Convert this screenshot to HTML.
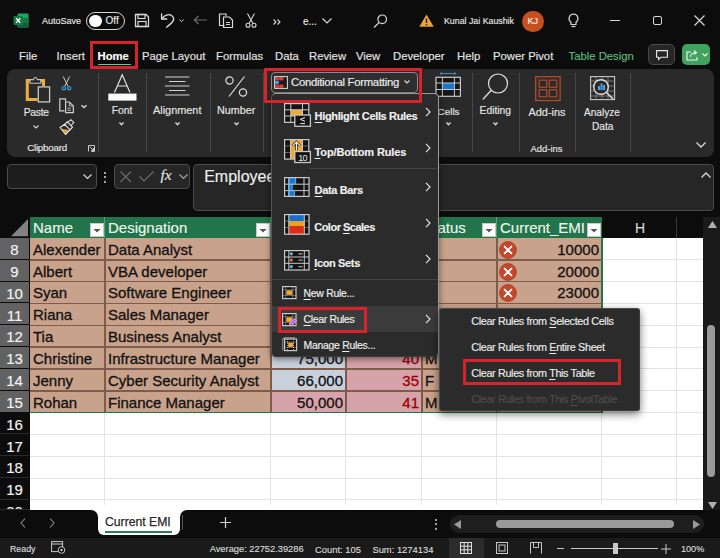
<!DOCTYPE html>
<html><head><meta charset="utf-8">
<style>
*{margin:0;padding:0;box-sizing:border-box}
html,body{width:720px;height:558px;overflow:hidden;background:#0c0c0c;font-family:"Liberation Sans",sans-serif;color:#fff;position:relative}
.a{position:absolute}
.t{position:absolute;white-space:nowrap;line-height:1;-webkit-text-stroke:0.15px currentColor}
svg{position:absolute;overflow:visible}
u{text-decoration:underline;text-underline-offset:1.5px;text-decoration-thickness:1px}
</style></head><body>
<div class="a" style="left:0px;top:0px;width:720px;height:69px;background:#0c0c0c"></div>
<svg style="left:13px;top:13px" width="16" height="15" viewBox="0 0 16 15">
<rect x="4.5" y="0.5" width="11" height="14" rx="1.2" fill="#21a366"/>
<rect x="4.5" y="5" width="11" height="4.5" fill="#107c41"/>
<rect x="4.5" y="9.5" width="11" height="5" rx="1.2" fill="#185c37"/>
<rect x="0.5" y="3" width="9.5" height="9" rx="1" fill="#107c41"/>
<path d="M3.2 5.2L7.3 9.8M7.3 5.2L3.2 9.8" stroke="#fff" stroke-width="1.3"/>
</svg>
<div class="t" style="left:42px;top:16.68px;font-size:9px;color:#e6e6e6;font-weight:normal;">AutoSave</div>
<div class="a" style="left:85.5px;top:11.5px;width:39px;height:18px;border:1.5px solid #d8d8d8;border-radius:9px"></div>
<div class="a" style="left:88.5px;top:14.5px;width:13px;height:12px;background:#fff;border-radius:6.5px"></div>
<div class="t" style="left:105.5px;top:15.73px;font-size:10px;color:#e6e6e6;font-weight:normal;">Off</div>
<svg style="left:134px;top:13px" width="16" height="15" viewBox="0 0 16 15">
<path d="M1.5 1.5H12L14.5 4V13.5H1.5Z" fill="none" stroke="#d8d8d8" stroke-width="1.3"/>
<rect x="4" y="1.5" width="7" height="4" fill="none" stroke="#d8d8d8" stroke-width="1.2"/>
<rect x="4" y="8.5" width="8" height="5" fill="none" stroke="#d8d8d8" stroke-width="1.2"/>
</svg>
<svg style="left:160px;top:13px" width="15" height="15" viewBox="0 0 15 15">
<path d="M2 5.6C4.5 1.5 10 0.3 12.8 3.6C14.8 6 13.6 9.2 6.5 14.2" fill="none" stroke="#e0e0e0" stroke-width="1.3" stroke-linecap="round"/>
<path d="M1.6 0.8V6H6.8" fill="none" stroke="#e0e0e0" stroke-width="1.3" stroke-linecap="round" stroke-linejoin="round"/>
</svg>
<svg style="left:179px;top:19px" width="5" height="4" viewBox="0 0 5 4"><path d="M0.5 0.5L2.5 2.7L4.5 0.5" fill="none" stroke="#d8d8d8" stroke-width="1"/></svg>
<svg style="left:193px;top:15px" width="15" height="10" viewBox="0 0 15 10"><path d="M14 5H1.5M5.5 1L1.3 5L5.5 9" fill="none" stroke="#6a6a6a" stroke-width="1.2"/></svg>
<svg style="left:218px;top:13px" width="16" height="15" viewBox="0 0 16 15">
<path d="M6.5 12.5H1.5V1H8V3.5" fill="none" stroke="#d8d8d8" stroke-width="1.2"/>
<path d="M5.5 4H11.5L14.5 7V14.5H5.5Z" fill="none" stroke="#d8d8d8" stroke-width="1.2"/>
<path d="M8 9.5H12M8 11.5H12" stroke="#d8d8d8" stroke-width="1"/>
</svg>
<svg style="left:245px;top:13px" width="12" height="15" viewBox="0 0 12 15">
<path d="M2.5 0.5L8 10.5M9.5 0.5L4 10.5" stroke="#d8d8d8" stroke-width="1.1"/>
<circle cx="3" cy="12.3" r="2" fill="none" stroke="#d8d8d8" stroke-width="1.1"/>
<circle cx="9" cy="12.3" r="2" fill="none" stroke="#d8d8d8" stroke-width="1.1"/>
</svg>
<svg style="left:273px;top:19px" width="8" height="6" viewBox="0 0 8 6"><path d="M0.5 0.5L3 3L0.5 5.5M4.5 0.5L7 3L4.5 5.5" fill="none" stroke="#d8d8d8" stroke-width="1.1"/></svg>
<div class="t" style="left:303px;top:16.54px;font-size:10px;color:#e6e6e6;font-weight:normal;">e...</div>
<svg style="left:322px;top:18px" width="10" height="6" viewBox="0 0 10 6"><path d="M0.5 0.5L5 5L9.5 0.5" fill="none" stroke="#d8d8d8" stroke-width="1.2"/></svg>
<svg style="left:373px;top:14px" width="15" height="14" viewBox="0 0 15 14">
<circle cx="9.2" cy="5.3" r="4.3" fill="none" stroke="#d8d8d8" stroke-width="1.2"/>
<path d="M6.2 8.4L1 13.5" stroke="#d8d8d8" stroke-width="1.3"/>
</svg>
<svg style="left:419px;top:14px" width="15" height="13" viewBox="0 0 15 13">
<path d="M7.5 0.5L14.7 12.8H0.3Z" fill="#eaa435"/>
<path d="M7.5 4.5V9" stroke="#1a1a1a" stroke-width="1.3"/>
<circle cx="7.5" cy="10.8" r="0.8" fill="#1a1a1a"/>
</svg>
<div class="t" style="left:444px;top:17.35px;font-size:8.8px;color:#e6e6e6;font-weight:normal;">Kunal Jai Kaushik</div>
<div class="a" style="left:522px;top:10.5px;width:21.5px;height:21.5px;background:#c8501e;border-radius:50%"></div>
<div class="t" style="left:382.79999999999995px;width:300px;text-align:center;top:16.88px;font-size:9px;color:#f4f4f4;font-weight:normal;">KJ</div>
<svg style="left:568px;top:13px" width="11" height="16" viewBox="0 0 11 16">
<path d="M5.5 1A4.5 4.5 0 0 0 3 9.2V11.5H8V9.2A4.5 4.5 0 0 0 5.5 1Z" fill="none" stroke="#d8d8d8" stroke-width="1.2"/>
<path d="M3.5 13.5H7.5" stroke="#d8d8d8" stroke-width="1.2"/>
</svg>
<div class="a" style="left:610px;top:20px;width:10px;height:1.2px;background:#d8d8d8"></div>
<div class="a" style="left:652.5px;top:15.5px;width:9.5px;height:9.5px;border:1.2px solid #d8d8d8;border-radius:2px"></div>
<svg style="left:694px;top:15px" width="11" height="11" viewBox="0 0 11 11"><path d="M0.5 0.5L10.5 10.5M10.5 0.5L0.5 10.5" stroke="#d8d8d8" stroke-width="1.2"/></svg>
<div class="t" style="left:19px;top:51.43px;font-size:11.3px;color:#e6e6e6;font-weight:normal;">File</div>
<div class="t" style="left:56.6px;top:51.43px;font-size:11.3px;color:#e6e6e6;font-weight:normal;">Insert</div>
<div class="t" style="left:142px;top:51.43px;font-size:11.3px;color:#e6e6e6;font-weight:normal;">Page Layout</div>
<div class="t" style="left:216px;top:51.43px;font-size:11.3px;color:#e6e6e6;font-weight:normal;">Formulas</div>
<div class="t" style="left:275px;top:51.43px;font-size:11.3px;color:#e6e6e6;font-weight:normal;">Data</div>
<div class="t" style="left:309px;top:51.43px;font-size:11.3px;color:#e6e6e6;font-weight:normal;">Review</div>
<div class="t" style="left:356px;top:51.43px;font-size:11.3px;color:#e6e6e6;font-weight:normal;">View</div>
<div class="t" style="left:393px;top:51.43px;font-size:11.3px;color:#e6e6e6;font-weight:normal;">Developer</div>
<div class="t" style="left:457px;top:51.43px;font-size:11.3px;color:#e6e6e6;font-weight:normal;">Help</div>
<div class="t" style="left:493px;top:51.43px;font-size:11.3px;color:#e6e6e6;font-weight:normal;">Power Pivot</div>
<div class="t" style="left:97.5px;top:51.43px;font-size:11.3px;color:#ffffff;font-weight:bold;">Home</div>
<div class="a" style="left:97.5px;top:63.5px;width:33px;height:1.7px;background:#7cc492;border-radius:1px"></div>
<div class="t" style="left:568.5px;top:51.43px;font-size:11.3px;color:#5fb97f;font-weight:normal;">Table Design</div>
<div class="a" style="left:90px;top:41px;width:48px;height:28.2px;border:3px solid #d7232b"></div>
<div class="a" style="left:647.8px;top:44.2px;width:27.7px;height:21.3px;border:1px solid #4a4a4a;border-radius:5px;background:#262626"></div>
<svg style="left:655.5px;top:49.7px" width="12" height="10" viewBox="0 0 12 10"><path d="M0.6 0.6H11.4V7.2H5L2.6 9.4V7.2H0.6Z" fill="none" stroke="#e8e8e8" stroke-width="1.1"/></svg>
<div class="a" style="left:682.2px;top:44.2px;width:27.8px;height:21.3px;border-radius:5px;background:#3fa35f"></div>
<svg style="left:686px;top:49px" width="14" height="12" viewBox="0 0 14 12">
<path d="M5 3H1V11H11V8" fill="none" stroke="#f4f4f4" stroke-width="1.1"/>
<path d="M4.5 8C4.5 5 7 3.5 10 3.5M8 1.3L10.5 3.5L8 5.7" fill="none" stroke="#f4f4f4" stroke-width="1.1"/>
</svg>
<svg style="left:701.5px;top:53px" width="6" height="4" viewBox="0 0 6 4"><path d="M0.5 0.5L3 3L5.5 0.5" fill="none" stroke="#f4f4f4" stroke-width="1.2"/></svg>
<div class="a" style="left:7px;top:68.5px;width:706.5px;height:88px;background:#2a2a2a;border-radius:8px"></div>
<div class="a" style="left:97.5px;top:72.5px;width:1px;height:79px;background:#484848"></div>
<div class="a" style="left:145.5px;top:72.5px;width:1px;height:79px;background:#484848"></div>
<div class="a" style="left:209.5px;top:72.5px;width:1px;height:79px;background:#484848"></div>
<div class="a" style="left:263px;top:72.5px;width:1px;height:79px;background:#484848"></div>
<div class="a" style="left:472px;top:72.5px;width:1px;height:79px;background:#484848"></div>
<div class="a" style="left:519px;top:72.5px;width:1px;height:79px;background:#484848"></div>
<div class="a" style="left:575px;top:72.5px;width:1px;height:79px;background:#484848"></div>
<div class="a" style="left:629.5px;top:72.5px;width:1px;height:79px;background:#484848"></div>
<svg style="left:25px;top:75px" width="26" height="28" viewBox="0 0 26 28">
<path d="M5.5 5.6H2.3V24.6H12.5" fill="none" stroke="#eeac3e" stroke-width="3"/>
<path d="M15.5 5.6H18.5V11" fill="none" stroke="#eeac3e" stroke-width="3"/>
<path d="M5 8.2V4.6H8.3Q10.4 0.4 12.5 4.6H15.8V8.2Z" fill="#2a2a2a" stroke="#c0c0c0" stroke-width="1.1"/>
<rect x="13.3" y="11.9" width="11.3" height="15" fill="#2a2a2a" stroke="#c8c8c8" stroke-width="1.3"/>
</svg>
<div class="t" style="left:23.8px;top:107.88px;font-size:10.3px;color:#e6e6e6;font-weight:normal;letter-spacing:-0.3px">Paste</div>
<svg style="left:32.5px;top:125px" width="6" height="4" viewBox="0 0 6 4"><path d="M0.5 0.5L3 3L5.5 0.5" fill="none" stroke="#d8d8d8" stroke-width="1.1"/></svg>
<svg style="left:61px;top:75.5px" width="11" height="15" viewBox="0 0 11 15">
<path d="M2.2 0.5L7.2 10.5M8.6 0.5L3.6 10.5" stroke="#e0e0e0" stroke-width="0.9"/>
<circle cx="2.8" cy="12.2" r="1.7" fill="#1a3a50" stroke="#4a9ad0" stroke-width="1.2"/>
<circle cx="8.1" cy="12.2" r="1.7" fill="#1a3a50" stroke="#4a9ad0" stroke-width="1.2"/>
</svg>
<svg style="left:59px;top:97.5px" width="16" height="16" viewBox="0 0 16 16">
<path d="M5.5 12.8H0.8V0.9H6.5V3.5" fill="none" stroke="#d0d0d0" stroke-width="1.2"/>
<path d="M6.6 4H10.4L14.3 7.9V14.6H6.6Z" fill="none" stroke="#d0d0d0" stroke-width="1.2"/>
<path d="M10.4 4V7.9H14.3" fill="none" stroke="#d0d0d0" stroke-width="0.9"/>
<path d="M8.4 10.2H11.8M8.4 12.3H11.8" stroke="#d0d0d0" stroke-width="0.9"/>
</svg>
<svg style="left:80.5px;top:104.5px" width="6" height="3" viewBox="0 0 6 3"><path d="M0.5 0.3L3 2.6L5.5 0.3" fill="none" stroke="#d8d8d8" stroke-width="1.3"/></svg>
<svg style="left:56px;top:116px" width="24" height="24" viewBox="0 0 24 24">
<path d="M5.5 12.8L9.5 17.8L13 14.3Z" fill="#eaa63a"/>
<path d="M4 11.5L9.5 18.5L14 13.8L8.7 8.3Z" fill="none" stroke="#e8e8e8" stroke-width="1.1" stroke-linejoin="round"/>
<path d="M8.7 8.3L11.2 5.8L16.5 11.2L14 13.8" fill="none" stroke="#e8e8e8" stroke-width="1.1"/>
<path d="M11.6 6.2L15 3.8L17.8 6.6L14.9 9.6" fill="none" stroke="#d8d8d8" stroke-width="1.1"/>
</svg>
<div class="t" style="left:27.2px;top:142.70px;font-size:9.8px;color:#e6e6e6;font-weight:normal;letter-spacing:-0.25px">Clipboard</div>
<svg style="left:88px;top:144.5px" width="7" height="7" viewBox="0 0 7 7">
<path d="M0.5 6.5V0.5H6.5V6.5H3.5" fill="none" stroke="#c8c8c8" stroke-width="1"/>
<path d="M1.8 1.8L5.5 5.5M5.5 3V5.5H3" fill="none" stroke="#c8c8c8" stroke-width="1"/>
</svg>
<svg style="left:107.5px;top:74px" width="29" height="27" viewBox="0 0 29 27">
<path d="M6.5 18.5L14.2 0.7L22 18.5M9.3 12H19.2" fill="none" stroke="#e0e0e0" stroke-width="1.2"/>
<rect x="0.3" y="19.6" width="28.2" height="7" fill="#fafafa"/>
</svg>
<div class="t" style="left:111.8px;top:105.52px;font-size:10.25px;color:#e6e6e6;font-weight:normal;">Font</div>
<svg style="left:119px;top:121.5px" width="5" height="4" viewBox="0 0 5 4"><path d="M0.5 0.5L2.5 2.7L4.5 0.5" fill="none" stroke="#d8d8d8" stroke-width="1.3"/></svg>
<svg style="left:165px;top:76px" width="25" height="20" viewBox="0 0 25 20">
<path d="M0 1H24.5M4 5.5H20.5M0 10H24.5M4 14.5H20.5M0 19H24.5" stroke="#d4d4d4" stroke-width="1.2"/>
</svg>
<div class="t" style="left:153px;top:104.97px;font-size:10.9px;color:#e6e6e6;font-weight:normal;">Alignment</div>
<svg style="left:175px;top:121.5px" width="5" height="4" viewBox="0 0 5 4"><path d="M0.5 0.5L2.5 2.7L4.5 0.5" fill="none" stroke="#d8d8d8" stroke-width="1.3"/></svg>
<svg style="left:224.5px;top:75.5px" width="23" height="21" viewBox="0 0 23 21">
<circle cx="4.5" cy="4.5" r="3.6" fill="none" stroke="#e0e0e0" stroke-width="1.2"/>
<circle cx="18" cy="16.5" r="3.6" fill="none" stroke="#e0e0e0" stroke-width="1.2"/>
<path d="M19.5 0.5L4 20.5" stroke="#e0e0e0" stroke-width="1.2"/>
</svg>
<div class="t" style="left:217px;top:105.10px;font-size:10.75px;color:#e6e6e6;font-weight:normal;">Number</div>
<svg style="left:233.5px;top:121.5px" width="5" height="4" viewBox="0 0 5 4"><path d="M0.5 0.5L2.5 2.7L4.5 0.5" fill="none" stroke="#d8d8d8" stroke-width="1.3"/></svg>
<svg style="left:435px;top:72px" width="26" height="26" viewBox="0 0 26 26">
<path d="M6 1.5H20M6 0V3M20 0V3" stroke="#4a8ac8" stroke-width="1"/>
<rect x="1" y="5.3" width="24.4" height="19" fill="#151515"/>
<rect x="7.4" y="11" width="12" height="6.5" fill="#1677d2"/>
<path d="M1 11H25.4M1 17.5H25.4M7.4 5.3V24.3M19.4 5.3V24.3" stroke="#c8c8c8" stroke-width="1"/>
<rect x="1" y="5.3" width="24.4" height="19" fill="none" stroke="#c8c8c8" stroke-width="1.2"/>
</svg>
<div class="t" style="left:437.6px;top:106.62px;font-size:9.9px;color:#e6e6e6;font-weight:normal;">Cells</div>
<svg style="left:446px;top:121.5px" width="5" height="4" viewBox="0 0 5 4"><path d="M0.5 0.5L2.5 2.7L4.5 0.5" fill="none" stroke="#d8d8d8" stroke-width="1.3"/></svg>
<svg style="left:482px;top:73px" width="27" height="28" viewBox="0 0 27 28">
<circle cx="16" cy="10.5" r="9.5" fill="none" stroke="#e0e0e0" stroke-width="1.2"/>
<path d="M9.2 17.3L0.8 26.5" stroke="#e0e0e0" stroke-width="1.3"/>
</svg>
<div class="t" style="left:479.6px;top:106.28px;font-size:10.3px;color:#e6e6e6;font-weight:normal;">Editing</div>
<svg style="left:493px;top:121.5px" width="5" height="4" viewBox="0 0 5 4"><path d="M0.5 0.5L2.5 2.7L4.5 0.5" fill="none" stroke="#d8d8d8" stroke-width="1.3"/></svg>
<svg style="left:535px;top:76px" width="26" height="25" viewBox="0 0 26 25">
<rect x="0.7" y="0.7" width="24.4" height="23.8" fill="none" stroke="#a94a2b" stroke-width="1.4"/>
<rect x="4.2" y="4.2" width="7.5" height="7" fill="none" stroke="#a94a2b" stroke-width="1.3"/>
<rect x="14.2" y="4.2" width="7.5" height="7" fill="none" stroke="#a94a2b" stroke-width="1.3"/>
<rect x="4.2" y="13.8" width="7.5" height="7" fill="none" stroke="#a94a2b" stroke-width="1.3"/>
<rect x="14.2" y="13.8" width="7.5" height="7" fill="none" stroke="#a94a2b" stroke-width="1.3"/>
</svg>
<div class="t" style="left:528.5px;top:106.97px;font-size:10.9px;color:#e6e6e6;font-weight:normal;">Add-ins</div>
<div class="t" style="left:530.6px;top:144.24px;font-size:9.4px;color:#e6e6e6;font-weight:normal;">Add-ins</div>
<svg style="left:589.5px;top:76px" width="26" height="25" viewBox="0 0 26 25">
<rect x="0.6" y="0.6" width="24" height="23" fill="none" stroke="#c8c8c8" stroke-width="1.1"/>
<path d="M0.6 5H24.6M0.6 10H24.6M0.6 15H24.6M0.6 20H24.6M6 0.6V23.6M12 0.6V23.6M18 0.6V23.6" stroke="#8a8a8a" stroke-width="0.8"/>
<circle cx="11" cy="11" r="7.3" fill="#2a2a2a" stroke="#e0e0e0" stroke-width="1.4"/>
<rect x="8" y="10" width="2" height="4" fill="#4aa3e8"/><rect x="10.5" y="7.5" width="2" height="6.5" fill="#4aa3e8"/><rect x="13" y="9" width="2" height="5" fill="#4aa3e8"/>
<path d="M16.2 16.2L23 23" stroke="#e0e0e0" stroke-width="1.6"/>
</svg>
<div class="t" style="left:584px;top:108.25px;font-size:10.1px;color:#e6e6e6;font-weight:normal;">Analyze</div>
<div class="t" style="left:592px;top:121.75px;font-size:10.1px;color:#e6e6e6;font-weight:normal;">Data</div>
<svg style="left:696px;top:142px" width="10" height="6" viewBox="0 0 10 6"><path d="M0.5 0.5L5 5L9.5 0.5" fill="none" stroke="#d8d8d8" stroke-width="1.3"/></svg>
<div class="a" style="left:7px;top:163.5px;width:89.5px;height:25.5px;background:#1d1d1d;border:1px solid #4a4a4a;border-radius:4px"></div>
<svg style="left:83px;top:173.5px" width="9" height="5" viewBox="0 0 9 5"><path d="M0.5 0.5L4.5 4.5L8.5 0.5" fill="none" stroke="#d8d8d8" stroke-width="1.2"/></svg>
<div class="a" style="left:104px;top:172.2px;width:2px;height:2px;background:#d8d8d8;border-radius:1px"></div>
<div class="a" style="left:104px;top:176.4px;width:2px;height:2px;background:#d8d8d8;border-radius:1px"></div>
<div class="a" style="left:104px;top:180.6px;width:2px;height:2px;background:#d8d8d8;border-radius:1px"></div>
<div class="a" style="left:114px;top:163.5px;width:76px;height:25.5px;background:#262626;border:1px solid #4a4a4a;border-radius:4px"></div>
<svg style="left:120px;top:170.5px" width="12" height="12" viewBox="0 0 12 12"><path d="M0.5 0.5L11 11M11 0.5L0.5 11" stroke="#6e6e6e" stroke-width="1.1"/></svg>
<svg style="left:139px;top:171px" width="15" height="11" viewBox="0 0 15 11"><path d="M0.5 5.5L5 10L14.5 0.5" fill="none" stroke="#6e6e6e" stroke-width="1.1"/></svg>
<div class="t" style="left:160.5px;top:167.08px;font-size:15.5px;color:#e8e8e8;font-weight:normal;font-family:'Liberation Serif',serif"><i>fx</i></div>
<svg style="left:179px;top:173.5px" width="9" height="5" viewBox="0 0 9 5"><path d="M0.5 0.5L4.5 4.5L8.5 0.5" fill="none" stroke="#a8a8a8" stroke-width="1.1"/></svg>
<div class="a" style="left:193.3px;top:163.5px;width:520.5px;height:47px;background:#262626;border:1px solid #4a4a4a;border-radius:4px"></div>
<div class="t" style="left:204.2px;top:168.86px;font-size:16px;color:#f0f0f0;font-weight:normal;">Employee</div>
<svg style="left:700.5px;top:172px" width="10" height="6" viewBox="0 0 10 6"><path d="M0.5 5.5L5 1L9.5 5.5" fill="none" stroke="#d8d8d8" stroke-width="1.3"/></svg>
<div class="a" style="left:0px;top:211px;width:720px;height:299px;background:#0c0c0c"></div>
<div class="a" style="left:30px;top:238px;width:673px;height:272px;background:#fff"></div>
<div class="a" style="left:104px;top:238px;width:1px;height:272px;background:#e4e4e4"></div>
<div class="a" style="left:270px;top:238px;width:1px;height:272px;background:#e4e4e4"></div>
<div class="a" style="left:345px;top:238px;width:1px;height:272px;background:#e4e4e4"></div>
<div class="a" style="left:421px;top:238px;width:1px;height:272px;background:#e4e4e4"></div>
<div class="a" style="left:496px;top:238px;width:1px;height:272px;background:#e4e4e4"></div>
<div class="a" style="left:601px;top:238px;width:1px;height:272px;background:#e4e4e4"></div>
<div class="a" style="left:676px;top:238px;width:1px;height:272px;background:#e4e4e4"></div>
<div class="a" style="left:30px;top:259.33px;width:673px;height:1px;background:#e4e4e4"></div>
<div class="a" style="left:30px;top:281.15999999999997px;width:673px;height:1px;background:#e4e4e4"></div>
<div class="a" style="left:30px;top:302.99px;width:673px;height:1px;background:#e4e4e4"></div>
<div class="a" style="left:30px;top:324.82px;width:673px;height:1px;background:#e4e4e4"></div>
<div class="a" style="left:30px;top:346.65px;width:673px;height:1px;background:#e4e4e4"></div>
<div class="a" style="left:30px;top:368.48px;width:673px;height:1px;background:#e4e4e4"></div>
<div class="a" style="left:30px;top:390.31px;width:673px;height:1px;background:#e4e4e4"></div>
<div class="a" style="left:30px;top:412.14px;width:673px;height:1px;background:#e4e4e4"></div>
<div class="a" style="left:30px;top:433.96999999999997px;width:673px;height:1px;background:#e4e4e4"></div>
<div class="a" style="left:30px;top:455.79999999999995px;width:673px;height:1px;background:#e4e4e4"></div>
<div class="a" style="left:30px;top:477.63px;width:673px;height:1px;background:#e4e4e4"></div>
<div class="a" style="left:30px;top:499.46px;width:673px;height:1px;background:#e4e4e4"></div>
<div class="a" style="left:30px;top:521.29px;width:673px;height:1px;background:#e4e4e4"></div>
<div class="a" style="left:30px;top:238px;width:572px;height:174.64px;background:#c9a28b"></div>
<div class="a" style="left:271px;top:347.15px;width:75px;height:43.660000000000025px;background:#c8d0dc"></div>
<div class="a" style="left:271px;top:390.81px;width:75px;height:21.829999999999984px;background:#d6a3aa"></div>
<div class="a" style="left:346px;top:347.15px;width:76px;height:65.49000000000001px;background:#d6a3aa"></div>
<div class="a" style="left:104px;top:238px;width:1.5px;height:174.64px;background:#7d5c4b"></div>
<div class="a" style="left:270px;top:238px;width:1.5px;height:174.64px;background:#7d5c4b"></div>
<div class="a" style="left:345px;top:238px;width:1.5px;height:174.64px;background:#7d5c4b"></div>
<div class="a" style="left:421px;top:238px;width:1.5px;height:174.64px;background:#7d5c4b"></div>
<div class="a" style="left:496px;top:238px;width:1.5px;height:174.64px;background:#7d5c4b"></div>
<div class="a" style="left:601px;top:238px;width:1.5px;height:174.64px;background:#22744a"></div>
<div class="a" style="left:30px;top:259.08px;width:572px;height:1.5px;background:#7d5c4b"></div>
<div class="a" style="left:30px;top:280.90999999999997px;width:572px;height:1.5px;background:#7d5c4b"></div>
<div class="a" style="left:30px;top:302.74px;width:572px;height:1.5px;background:#7d5c4b"></div>
<div class="a" style="left:30px;top:324.57px;width:572px;height:1.5px;background:#7d5c4b"></div>
<div class="a" style="left:30px;top:346.4px;width:572px;height:1.5px;background:#7d5c4b"></div>
<div class="a" style="left:30px;top:368.23px;width:572px;height:1.5px;background:#7d5c4b"></div>
<div class="a" style="left:30px;top:390.06px;width:572px;height:1.5px;background:#7d5c4b"></div>
<div class="a" style="left:30px;top:411.64px;width:573px;height:1.5px;background:#22744a"></div>
<div class="a" style="left:0px;top:412.64px;width:29px;height:97.36000000000001px;background:#2a2a2a"></div>
<div class="a" style="left:0;top:238.0px;width:29px;height:20.829999999999984px;background:#626262;overflow:hidden"><div class="t" style="left:0;width:29px;text-align:center;top:4.18px;font-size:15px;color:#f4f4f4">8</div></div>
<div class="a" style="left:0;top:259.83px;width:29px;height:20.829999999999984px;background:#626262;overflow:hidden"><div class="t" style="left:0;width:29px;text-align:center;top:4.18px;font-size:15px;color:#f4f4f4">9</div></div>
<div class="a" style="left:0;top:281.65999999999997px;width:29px;height:20.83000000000004px;background:#626262;overflow:hidden"><div class="t" style="left:0;width:29px;text-align:center;top:4.19px;font-size:15px;color:#f4f4f4">10</div></div>
<div class="a" style="left:0;top:303.49px;width:29px;height:20.829999999999984px;background:#626262;overflow:hidden"><div class="t" style="left:0;width:29px;text-align:center;top:4.18px;font-size:15px;color:#f4f4f4">11</div></div>
<div class="a" style="left:0;top:325.32px;width:29px;height:20.829999999999984px;background:#626262;overflow:hidden"><div class="t" style="left:0;width:29px;text-align:center;top:4.18px;font-size:15px;color:#f4f4f4">12</div></div>
<div class="a" style="left:0;top:347.15px;width:29px;height:20.83000000000004px;background:#626262;overflow:hidden"><div class="t" style="left:0;width:29px;text-align:center;top:4.19px;font-size:15px;color:#f4f4f4">13</div></div>
<div class="a" style="left:0;top:368.98px;width:29px;height:20.829999999999984px;background:#626262;overflow:hidden"><div class="t" style="left:0;width:29px;text-align:center;top:4.18px;font-size:15px;color:#f4f4f4">14</div></div>
<div class="a" style="left:0;top:390.81px;width:29px;height:20.829999999999984px;background:#626262;overflow:hidden"><div class="t" style="left:0;width:29px;text-align:center;top:4.18px;font-size:15px;color:#f4f4f4">15</div></div>
<div class="a" style="left:0;top:412.64px;width:29px;height:20.829999999999984px;background:#0c0c0c;overflow:hidden"><div class="t" style="left:0;width:29px;text-align:center;top:4.18px;font-size:15px;color:#f4f4f4">16</div></div>
<div class="a" style="left:0;top:434.46999999999997px;width:29px;height:20.829999999999984px;background:#0c0c0c;overflow:hidden"><div class="t" style="left:0;width:29px;text-align:center;top:4.18px;font-size:15px;color:#f4f4f4">17</div></div>
<div class="a" style="left:0;top:456.29999999999995px;width:29px;height:20.83000000000004px;background:#0c0c0c;overflow:hidden"><div class="t" style="left:0;width:29px;text-align:center;top:4.19px;font-size:15px;color:#f4f4f4">18</div></div>
<div class="a" style="left:0;top:478.13px;width:29px;height:20.829999999999984px;background:#0c0c0c;overflow:hidden"><div class="t" style="left:0;width:29px;text-align:center;top:4.18px;font-size:15px;color:#f4f4f4">19</div></div>
<div class="a" style="left:0;top:499.96px;width:29px;height:9.04000000000002px;background:#0c0c0c;overflow:hidden"><div class="t" style="left:0;width:29px;text-align:center;top:4.18px;font-size:15px;color:#f4f4f4">20</div></div>
<svg style="left:0px;top:217px" width="29" height="21" viewBox="0 0 29 21"><polygon points="28,2 28,19.3 11,19.3" fill="#828282"/></svg>
<div class="a" style="left:30px;top:217px;width:572px;height:21px;background:#22744a"></div>
<div class="a" style="left:104px;top:217px;width:1px;height:21px;background:#5a9e74"></div>
<div class="a" style="left:270px;top:217px;width:1px;height:21px;background:#5a9e74"></div>
<div class="a" style="left:345px;top:217px;width:1px;height:21px;background:#5a9e74"></div>
<div class="a" style="left:421px;top:217px;width:1px;height:21px;background:#5a9e74"></div>
<div class="a" style="left:496px;top:217px;width:1px;height:21px;background:#5a9e74"></div>
<div class="t" style="left:33px;top:220.30px;font-size:15px;color:#eef6ee;font-weight:normal;">Name</div>
<div class="t" style="left:108px;top:220.30px;font-size:15px;color:#eef6ee;font-weight:normal;">Designation</div>
<div class="t" style="left:423.3px;top:220.30px;font-size:15px;color:#eef6ee;font-weight:normal;">Status</div>
<div class="t" style="left:500px;top:220.30px;font-size:15px;color:#eef6ee;font-weight:normal;">Current_EMI</div>
<div class="a" style="left:90px;top:223px;width:14px;height:14px;background:#fff;border:1px solid #c8c8c8"></div>
<svg style="left:90px;top:223px" width="14" height="14" viewBox="0 0 14 14"><polygon points="3.5,6 10.5,6 7,9.5" fill="#555"/></svg>
<div class="a" style="left:256px;top:223px;width:14px;height:14px;background:#fff;border:1px solid #c8c8c8"></div>
<svg style="left:256px;top:223px" width="14" height="14" viewBox="0 0 14 14"><polygon points="3.5,6 10.5,6 7,9.5" fill="#555"/></svg>
<div class="a" style="left:331px;top:223px;width:14px;height:14px;background:#fff;border:1px solid #c8c8c8"></div>
<svg style="left:331px;top:223px" width="14" height="14" viewBox="0 0 14 14"><polygon points="3.5,6 10.5,6 7,9.5" fill="#555"/></svg>
<div class="a" style="left:407px;top:223px;width:14px;height:14px;background:#fff;border:1px solid #c8c8c8"></div>
<svg style="left:407px;top:223px" width="14" height="14" viewBox="0 0 14 14"><polygon points="3.5,6 10.5,6 7,9.5" fill="#555"/></svg>
<div class="a" style="left:482px;top:223px;width:14px;height:14px;background:#fff;border:1px solid #c8c8c8"></div>
<svg style="left:482px;top:223px" width="14" height="14" viewBox="0 0 14 14"><polygon points="3.5,6 10.5,6 7,9.5" fill="#555"/></svg>
<div class="a" style="left:587px;top:223px;width:14px;height:14px;background:#fff;border:1px solid #c8c8c8"></div>
<svg style="left:587px;top:223px" width="14" height="14" viewBox="0 0 14 14"><polygon points="3.5,6 10.5,6 7,9.5" fill="#555"/></svg>
<div class="t" style="left:490px;width:300px;text-align:center;top:221.15px;font-size:14px;color:#d8d8d8;font-weight:normal;">H</div>
<div class="a" style="left:676px;top:217px;width:1px;height:21px;background:#3a3a3a"></div>
<div class="t" style="left:33px;top:241.80px;font-size:15px;color:#111;font-weight:normal;-webkit-text-stroke:0.3px currentColor">Alexender</div>
<div class="t" style="left:108px;top:241.80px;font-size:15px;color:#111;font-weight:normal;-webkit-text-stroke:0.3px currentColor">Data Analyst</div>
<div class="t" style="left:299px;width:300px;text-align:right;top:241.80px;font-size:15px;color:#111;-webkit-text-stroke:0.3px currentColor">10000</div>
<svg style="left:498.5px;top:240.8px" width="18" height="18" viewBox="0 0 18 18"><circle cx="9" cy="9" r="8.4" fill="#c4472a" stroke="#a83a22" stroke-width="0.8"/><path d="M5.6 5.6L12.4 12.4M12.4 5.6L5.6 12.4" stroke="#fff" stroke-width="1.9" stroke-linecap="round"/></svg>
<div class="t" style="left:33px;top:263.63px;font-size:15px;color:#111;font-weight:normal;-webkit-text-stroke:0.3px currentColor">Albert</div>
<div class="t" style="left:108px;top:263.63px;font-size:15px;color:#111;font-weight:normal;-webkit-text-stroke:0.3px currentColor">VBA developer</div>
<div class="t" style="left:299px;width:300px;text-align:right;top:263.63px;font-size:15px;color:#111;-webkit-text-stroke:0.3px currentColor">20000</div>
<svg style="left:498.5px;top:262.63px" width="18" height="18" viewBox="0 0 18 18"><circle cx="9" cy="9" r="8.4" fill="#c4472a" stroke="#a83a22" stroke-width="0.8"/><path d="M5.6 5.6L12.4 12.4M12.4 5.6L5.6 12.4" stroke="#fff" stroke-width="1.9" stroke-linecap="round"/></svg>
<div class="t" style="left:33px;top:285.46px;font-size:15px;color:#111;font-weight:normal;-webkit-text-stroke:0.3px currentColor">Syan</div>
<div class="t" style="left:108px;top:285.46px;font-size:15px;color:#111;font-weight:normal;-webkit-text-stroke:0.3px currentColor">Software Engineer</div>
<div class="t" style="left:299px;width:300px;text-align:right;top:285.46px;font-size:15px;color:#111;-webkit-text-stroke:0.3px currentColor">23000</div>
<svg style="left:498.5px;top:284.46px" width="18" height="18" viewBox="0 0 18 18"><circle cx="9" cy="9" r="8.4" fill="#c4472a" stroke="#a83a22" stroke-width="0.8"/><path d="M5.6 5.6L12.4 12.4M12.4 5.6L5.6 12.4" stroke="#fff" stroke-width="1.9" stroke-linecap="round"/></svg>
<div class="t" style="left:33px;top:307.29px;font-size:15px;color:#111;font-weight:normal;-webkit-text-stroke:0.3px currentColor">Riana</div>
<div class="t" style="left:108px;top:307.29px;font-size:15px;color:#111;font-weight:normal;-webkit-text-stroke:0.3px currentColor">Sales Manager</div>
<div class="t" style="left:33px;top:329.12px;font-size:15px;color:#111;font-weight:normal;-webkit-text-stroke:0.3px currentColor">Tia</div>
<div class="t" style="left:108px;top:329.12px;font-size:15px;color:#111;font-weight:normal;-webkit-text-stroke:0.3px currentColor">Business Analyst</div>
<div class="t" style="left:33px;top:350.95px;font-size:15px;color:#111;font-weight:normal;-webkit-text-stroke:0.3px currentColor">Christine</div>
<div class="t" style="left:108px;top:350.95px;font-size:15px;color:#111;font-weight:normal;-webkit-text-stroke:0.3px currentColor">Infrastructure Manager</div>
<div class="t" style="left:43px;width:300px;text-align:right;top:350.95px;font-size:15px;color:#111;-webkit-text-stroke:0.3px currentColor">75,000</div>
<div class="t" style="left:119px;width:300px;text-align:right;top:350.95px;font-size:15px;color:#9c0006;-webkit-text-stroke:0.3px currentColor">40</div>
<div class="t" style="left:425px;top:350.95px;font-size:15px;color:#111;font-weight:normal;-webkit-text-stroke:0.3px currentColor">M</div>
<div class="t" style="left:33px;top:372.78px;font-size:15px;color:#111;font-weight:normal;-webkit-text-stroke:0.3px currentColor">Jenny</div>
<div class="t" style="left:108px;top:372.78px;font-size:15px;color:#111;font-weight:normal;-webkit-text-stroke:0.3px currentColor">Cyber Security Analyst</div>
<div class="t" style="left:43px;width:300px;text-align:right;top:372.78px;font-size:15px;color:#111;-webkit-text-stroke:0.3px currentColor">66,000</div>
<div class="t" style="left:119px;width:300px;text-align:right;top:372.78px;font-size:15px;color:#9c0006;-webkit-text-stroke:0.3px currentColor">35</div>
<div class="t" style="left:425px;top:372.78px;font-size:15px;color:#111;font-weight:normal;-webkit-text-stroke:0.3px currentColor">F</div>
<div class="t" style="left:33px;top:394.61px;font-size:15px;color:#111;font-weight:normal;-webkit-text-stroke:0.3px currentColor">Rohan</div>
<div class="t" style="left:108px;top:394.61px;font-size:15px;color:#111;font-weight:normal;-webkit-text-stroke:0.3px currentColor">Finance Manager</div>
<div class="t" style="left:43px;width:300px;text-align:right;top:394.61px;font-size:15px;color:#111;-webkit-text-stroke:0.3px currentColor">50,000</div>
<div class="t" style="left:119px;width:300px;text-align:right;top:394.61px;font-size:15px;color:#9c0006;-webkit-text-stroke:0.3px currentColor">41</div>
<div class="t" style="left:425px;top:394.61px;font-size:15px;color:#111;font-weight:normal;-webkit-text-stroke:0.3px currentColor">M</div>
<div class="a" style="left:703px;top:217px;width:17px;height:293px;background:#1a1a1a"></div>
<div class="a" style="left:707px;top:325px;width:8px;height:152px;background:#9a9a9a;border-radius:4px"></div>
<svg style="left:707.5px;top:221px" width="9" height="8" viewBox="0 0 9 8"><polygon points="4.5,0 9,7 0,7" fill="#b0b0b0"/></svg>
<svg style="left:707.5px;top:502px" width="9" height="8" viewBox="0 0 9 8"><polygon points="0,0 9,0 4.5,7" fill="#b0b0b0"/></svg>
<div class="a" style="left:30px;top:505px;width:673px;height:15px;background:#fff"></div>
<div class="a" style="left:0px;top:510.3px;width:97.5px;height:27.5px;background:#0c0c0c;border-radius:0 7px 0 0"></div>
<div class="a" style="left:179.5px;top:510.3px;width:540.5px;height:27.5px;background:#0c0c0c;border-radius:7px 0 0 0"></div>
<div class="a" style="left:97.5px;top:509px;width:82px;height:26px;background:#fff;border-radius:0 0 6px 6px"></div>
<div class="t" style="left:105px;top:516.37px;font-size:12.2px;color:#2a2a2a;font-weight:normal;-webkit-text-stroke:0.25px #2a2a2a">Current EMI</div>
<div class="a" style="left:105px;top:530.5px;width:67px;height:2px;background:#2f7d52"></div>
<svg style="left:20px;top:518px" width="6" height="10" viewBox="0 0 6 10"><path d="M5 0.5L1 5L5 9.5" fill="none" stroke="#8a8a8a" stroke-width="1.1"/></svg>
<svg style="left:49px;top:518px" width="6" height="10" viewBox="0 0 6 10"><path d="M1 0.5L5 5L1 9.5" fill="none" stroke="#8a8a8a" stroke-width="1.1"/></svg>
<div class="a" style="left:182px;top:515px;width:1px;height:15px;background:#555"></div>
<svg style="left:220px;top:517px" width="11" height="11" viewBox="0 0 11 11"><path d="M5.5 0V11M0 5.5H11" stroke="#d0d0d0" stroke-width="1.2"/></svg>
<div class="a" style="left:434.5px;top:519px;width:2px;height:2px;background:#d0d0d0;border-radius:1px"></div>
<div class="a" style="left:434.5px;top:523.3px;width:2px;height:2px;background:#d0d0d0;border-radius:1px"></div>
<div class="a" style="left:434.5px;top:527.6px;width:2px;height:2px;background:#d0d0d0;border-radius:1px"></div>
<div class="a" style="left:450px;top:515px;width:254px;height:18px;background:#1e1e1e;border-radius:9px"></div>
<div class="a" style="left:495.5px;top:520px;width:178px;height:8.3px;background:#9a9a9a;border-radius:4px"></div>
<svg style="left:454px;top:519.5px" width="7" height="9" viewBox="0 0 7 9"><polygon points="7,0 7,9 0,4.5" fill="#9a9a9a"/></svg>
<svg style="left:693px;top:519.5px" width="7" height="9" viewBox="0 0 7 9"><polygon points="0,0 0,9 7,4.5" fill="#9a9a9a"/></svg>
<div class="a" style="left:0px;top:537.5px;width:720px;height:20.5px;background:#1a1a1a"></div>
<div class="t" style="left:10px;top:545.05px;font-size:8.8px;color:#d8d8d8;font-weight:normal;">Ready</div>
<svg style="left:51px;top:541px" width="15" height="13" viewBox="0 0 15 13">
<rect x="0.6" y="0.6" width="11" height="10" fill="none" stroke="#c8c8c8" stroke-width="1"/>
<path d="M0.6 3H11.6" stroke="#c8c8c8" stroke-width="1"/>
<circle cx="10.5" cy="9" r="3.3" fill="#0c0c0c" stroke="#c8c8c8" stroke-width="1"/>
<circle cx="10.5" cy="9" r="1.2" fill="#c8c8c8"/>
</svg>
<div class="t" style="left:209.7px;top:544.63px;font-size:9.3px;color:#d8d8d8;font-weight:normal;">Average: 22752.39286</div>
<div class="t" style="left:315px;top:544.54px;font-size:9.4px;color:#d8d8d8;font-weight:normal;">Count: 105</div>
<div class="t" style="left:372.4px;top:544.54px;font-size:9.4px;color:#d8d8d8;font-weight:normal;">Sum: 1274134</div>
<div class="a" style="left:449px;top:537.5px;width:35px;height:20.5px;background:#2c2c2c"></div>
<svg style="left:460px;top:542px" width="12" height="12" viewBox="0 0 12 12"><rect x="0.5" y="0.5" width="11" height="11" fill="none" stroke="#e0e0e0" stroke-width="1"/><path d="M4.2 0.5V11.5M7.8 0.5V11.5M0.5 4.2H11.5M0.5 7.8H11.5" stroke="#e0e0e0" stroke-width="1"/></svg>
<svg style="left:495.5px;top:542px" width="12" height="12" viewBox="0 0 12 12"><rect x="0.5" y="0.5" width="11" height="11" fill="none" stroke="#c8c8c8" stroke-width="1"/><rect x="3" y="3" width="6" height="6" fill="none" stroke="#c8c8c8" stroke-width="1"/></svg>
<svg style="left:530px;top:542px" width="12" height="12" viewBox="0 0 12 12"><path d="M0.5 11.5V0.5H11.5V11.5M3.5 0.5V5.5H8.5V0.5" fill="none" stroke="#c8c8c8" stroke-width="1"/></svg>
<div class="a" style="left:557px;top:548px;width:7px;height:1px;background:#c8c8c8"></div>
<div class="a" style="left:571px;top:548px;width:87px;height:1px;background:#c8c8c8"></div>
<div class="a" style="left:612.5px;top:543px;width:5.5px;height:11px;background:#c8c8c8"></div>
<svg style="left:661px;top:543.5px" width="10" height="10" viewBox="0 0 10 10"><path d="M5 0V10M0 5H10" stroke="#c8c8c8" stroke-width="1"/></svg>
<div class="t" style="left:681px;top:544.80px;font-size:9.1px;color:#d8d8d8;font-weight:normal;">100%</div>
<div class="a" style="left:270.5px;top:72px;width:147.5px;height:20.5px;background:#2e2e2e;border:1px solid #8a8a8a;border-radius:4px"></div>
<svg style="left:274px;top:76px" width="14" height="13" viewBox="0 0 14 13">
<rect x="0.6" y="0.6" width="12.8" height="11.8" fill="#1a1a1a"/>
<rect x="1.2" y="1.2" width="8.5" height="3.3" fill="#e53935"/>
<rect x="1.2" y="4.8" width="3.8" height="3.4" fill="#4aa3e8"/>
<rect x="1.2" y="8.5" width="8.5" height="3.3" fill="#e53935"/>
<path d="M0.6 4.6H13.4M0.6 8.3H13.4M5 0.6V12.4M9.7 0.6V12.4" stroke="#1a1a1a" stroke-width="0.6" stroke-dasharray="1 1"/>
<rect x="0.6" y="0.6" width="12.8" height="11.8" fill="none" stroke="#d0d0d0" stroke-width="1.1"/>
</svg>
<div class="t" style="left:291px;top:77.33px;font-size:11.3px;color:#f0f0f0;font-weight:normal;letter-spacing:-0.26px">Conditional Formatting</div>
<svg style="left:403.5px;top:80px" width="6" height="4" viewBox="0 0 6 4"><path d="M0.5 0.5L3 3L5.5 0.5" fill="none" stroke="#e0e0e0" stroke-width="1.1"/></svg>
<div class="a" style="left:270.5px;top:93px;width:168.3px;height:264.3px;background:#2b2b2b;border:1.3px solid #9a9a9a;border-left-color:#555;border-bottom-color:#3a3a3a;border-radius:5px;box-shadow:0 2px 6px rgba(0,0,0,.5)"></div>
<svg style="left:283.5px;top:102.5px" width="28" height="24" viewBox="0 0 28 24">
<rect x="0.6" y="0.6" width="24.2" height="18.8" fill="#141414"/>
<rect x="6.8" y="6.8" width="11.7" height="6.2" fill="#f0a830"/>
<path d="M0.6 6.8H24.8M0.6 13H24.8M6.8 0.6V19.4M18.5 0.6V19.4" stroke="#c8c8c8" stroke-width="1"/>
<rect x="0.6" y="0.6" width="24.2" height="18.8" fill="none" stroke="#c8c8c8" stroke-width="1.2"/>
<rect x="10.8" y="12" width="15.6" height="11.3" fill="#141414" stroke="#c8c8c8" stroke-width="1.3"/>
<path d="M21 14.5L16.3 16.4L21 18.3M16.3 20.6H21" fill="none" stroke="#f0f0f0" stroke-width="1"/>
</svg>
<div class="t" style="left:314.6px;top:110.89px;font-size:11px;color:#f0f0f0;font-weight:bold;letter-spacing:-0.35px"><u>H</u>ighlight Cells Rules</div>
<svg style="left:425px;top:106.5px" width="6" height="10" viewBox="0 0 6 10"><path d="M1 0.8L5 5L1 9.2" fill="none" stroke="#e0e0e0" stroke-width="1.2"/></svg>
<svg style="left:283.5px;top:138.5px" width="28" height="25" viewBox="0 0 28 25">
<rect x="0.6" y="0.6" width="24.2" height="19.5" fill="#141414"/>
<rect x="6.5" y="0.6" width="12" height="19.5" fill="#f0a830"/>
<path d="M0.6 7H6.5M0.6 13.5H6.5M18.5 7H24.8M18.5 13.5H24.8" stroke="#c8c8c8" stroke-width="0.9" stroke-dasharray="1 1"/>
<path d="M6.5 0.6V20M18.5 0.6V20" stroke="#c8c8c8" stroke-width="1"/>
<rect x="0.6" y="0.6" width="24.2" height="19.5" fill="none" stroke="#c8c8c8" stroke-width="1.2"/>
<path d="M12.5 11.5V3M8.8 6.7L12.5 3L16.2 6.7" fill="none" stroke="#2a2a2a" stroke-width="2.6"/>
<path d="M12.5 11.5V3M8.8 6.7L12.5 3L16.2 6.7" fill="none" stroke="#f4f4f4" stroke-width="1.1"/>
<rect x="10.8" y="12.5" width="15.6" height="11" fill="#141414" stroke="#c8c8c8" stroke-width="1.3"/>
<text x="18.6" y="21.6" font-size="9" font-family="Liberation Sans" fill="#e8e8e8" text-anchor="middle" letter-spacing="-0.6">10</text>
</svg>
<div class="t" style="left:314.6px;top:147.19px;font-size:11px;color:#f0f0f0;font-weight:bold;letter-spacing:-0.15px"><u>T</u>op/Bottom Rules</div>
<svg style="left:425px;top:143.3px" width="6" height="10" viewBox="0 0 6 10"><path d="M1 0.8L5 5L1 9.2" fill="none" stroke="#e0e0e0" stroke-width="1.2"/></svg>
<div class="a" style="left:310px;top:167.5px;width:127px;height:1px;background:#454545"></div>
<svg style="left:283.5px;top:177px" width="26" height="20" viewBox="0 0 26 20">
<rect x="0.6" y="0.6" width="24.4" height="18.8" fill="#141414"/>
<rect x="4.8" y="0.6" width="6.8" height="6.6" fill="#1677d2"/>
<rect x="4.8" y="7.2" width="3.4" height="6.4" fill="#1677d2"/>
<rect x="4.8" y="13.6" width="5.6" height="5.8" fill="#1677d2"/>
<path d="M0.6 7.2H24.8M0.6 13.6H24.8M4.8 0.6V19.4M20 0.6V19.4" stroke="#c8c8c8" stroke-width="1"/>
<path d="M4.8 0.6V19.4M11.6 0.6V7.2H8.2V13.6H10.4V19.4" fill="none" stroke="#6ab4f0" stroke-width="0.9"/>
<rect x="0.6" y="0.6" width="24.4" height="18.8" fill="none" stroke="#c8c8c8" stroke-width="1.2"/>
</svg>
<div class="t" style="left:314.6px;top:185.19px;font-size:11px;color:#f0f0f0;font-weight:bold;letter-spacing:-0.35px"><u>D</u>ata Bars</div>
<svg style="left:425px;top:182px" width="6" height="10" viewBox="0 0 6 10"><path d="M1 0.8L5 5L1 9.2" fill="none" stroke="#e0e0e0" stroke-width="1.2"/></svg>
<svg style="left:283.5px;top:213.5px" width="26" height="21" viewBox="0 0 26 21">
<rect x="0.6" y="0.6" width="24.4" height="19.6" fill="#141414"/>
<rect x="4.8" y="0.6" width="15.5" height="6.4" fill="#1670d0"/>
<rect x="4.8" y="7" width="15.5" height="5.5" fill="#f0a020"/>
<rect x="4.8" y="12.5" width="15.5" height="7.7" fill="#e02a1a"/>
<path d="M0.6 7H4.8M0.6 13.5H4.8M20.3 7H25M20.3 13.5H25" stroke="#c8c8c8" stroke-width="0.9" stroke-dasharray="1 1"/>
<path d="M4.8 0.6V20.2M20.3 0.6V20.2" stroke="#c8c8c8" stroke-width="1"/>
<rect x="0.6" y="0.6" width="24.4" height="19.6" fill="none" stroke="#c8c8c8" stroke-width="1.2"/>
</svg>
<div class="t" style="left:314.2px;top:221.99px;font-size:11px;color:#f0f0f0;font-weight:bold;letter-spacing:-0.5px">Color <u>S</u>cales</div>
<svg style="left:425px;top:217.5px" width="6" height="10" viewBox="0 0 6 10"><path d="M1 0.8L5 5L1 9.2" fill="none" stroke="#e0e0e0" stroke-width="1.2"/></svg>
<svg style="left:283.5px;top:250px" width="26" height="21" viewBox="0 0 26 21">
<rect x="0.6" y="0.6" width="24.4" height="19.4" fill="#141414"/>
<path d="M0.6 7H25M0.6 13.3H25M4.8 0.6V20M20.3 0.6V20" stroke="#c8c8c8" stroke-width="1"/>
<rect x="0.6" y="0.6" width="24.4" height="19.4" fill="none" stroke="#c8c8c8" stroke-width="1.2"/>
<circle cx="7.3" cy="3.8" r="1.6" fill="#6ab8e8"/><circle cx="7.3" cy="10.1" r="1.6" fill="#e86a5a"/><circle cx="7.3" cy="16.6" r="1.6" fill="#6ab8e8"/>
<path d="M14.5 3.8H18.5M14.5 10.1H18.5M14.5 16.6H18.5" stroke="#a8a8a8" stroke-width="1.2"/>
</svg>
<div class="t" style="left:314.2px;top:258.09px;font-size:11px;color:#f0f0f0;font-weight:bold;letter-spacing:-0.35px"><u>I</u>con Sets</div>
<svg style="left:425px;top:253.5px" width="6" height="10" viewBox="0 0 6 10"><path d="M1 0.8L5 5L1 9.2" fill="none" stroke="#e0e0e0" stroke-width="1.2"/></svg>
<div class="a" style="left:271.5px;top:279px;width:166px;height:1px;background:#454545"></div>
<svg style="left:282px;top:286px" width="15" height="13" viewBox="0 0 15 13">
<rect x="0.6" y="0.6" width="13.4" height="12" fill="#141414"/>
<path d="M3.8 0.6V12.6M10.8 0.6V12.6M0.6 3.8H14M0.6 9.4H14" stroke="#c8c8c8" stroke-width="0.9" stroke-dasharray="1 1"/>
<rect x="4.3" y="4.3" width="6" height="4.6" fill="#f0a830"/>
<rect x="0.6" y="0.6" width="13.4" height="12" fill="none" stroke="#c8c8c8" stroke-width="1.2"/>
</svg>
<div class="t" style="left:303.5px;top:288.70px;font-size:10.4px;color:#f0f0f0;font-weight:normal;letter-spacing:-0.25px"><u>N</u>ew Rule...</div>
<div class="a" style="left:271.5px;top:306px;width:166px;height:26px;background:#3b3b3b"></div>
<svg style="left:282px;top:312.5px" width="15" height="13" viewBox="0 0 15 13">
<rect x="0.6" y="0.6" width="13.4" height="12" fill="#141414"/>
<path d="M3.8 0.6V12.6M10.8 0.6V12.6M0.6 3.8H14M0.6 9.4H14" stroke="#c8c8c8" stroke-width="0.9" stroke-dasharray="1 1"/>
<rect x="4.3" y="4.3" width="6" height="4.6" fill="#f0a830"/>
<rect x="0.6" y="0.6" width="13.4" height="12" fill="none" stroke="#c8c8c8" stroke-width="1.2"/>
<path d="M8 12L13.5 6.5" stroke="#b070d8" stroke-width="4"/><path d="M7.2 11L12.5 5.7L14.6 7.8L9.3 13.1Z" fill="none" stroke="#d8a8f0" stroke-width="0.8"/></svg>
<div class="t" style="left:303.5px;top:314.70px;font-size:10.4px;color:#f0f0f0;font-weight:normal;letter-spacing:-0.3px"><u>C</u>lear Rules</div>
<svg style="left:425px;top:313.5px" width="6" height="10" viewBox="0 0 6 10"><path d="M1 0.8L5 5L1 9.2" fill="none" stroke="#e0e0e0" stroke-width="1.2"/></svg>
<div class="a" style="left:277.5px;top:306.5px;width:89.5px;height:26px;border:3px solid #d7232b"></div>
<svg style="left:282px;top:337px" width="15" height="14" viewBox="0 0 15 14">
<path d="M0.8 13.5V1.6H2.4M1.6 0.8H13" fill="none" stroke="#9a9a9a" stroke-width="1"/>
<rect x="2.6" y="2" width="12" height="11.6" fill="#141414"/>
<path d="M5.6 2V13.6M11.6 2V13.6M2.6 5.2H14.6M2.6 10.4H14.6" stroke="#c8c8c8" stroke-width="0.9" stroke-dasharray="1 1"/>
<rect x="6.2" y="5.7" width="5" height="4.3" fill="#f0a830"/>
<rect x="2.6" y="2" width="12" height="11.6" fill="none" stroke="#c8c8c8" stroke-width="1.2"/>
</svg>
<div class="t" style="left:303.5px;top:341.20px;font-size:10.4px;color:#f0f0f0;font-weight:normal;letter-spacing:-0.25px">Manage <u>R</u>ules...</div>
<div class="a" style="left:264px;top:68px;width:157.5px;height:34.5px;border:3px solid #d7232b"></div>
<div class="a" style="left:438.8px;top:307.8px;width:201.6px;height:102.8px;background:#2b2b2b;border:1px solid #3c3c3c;border-top-color:#4a4a4a;border-left-color:#4a4a4a;border-radius:3px;box-shadow:0 3px 8px rgba(0,0,0,.55)"></div>
<div class="t" style="left:471.3px;top:316.26px;font-size:10.8px;color:#ececec;font-weight:normal;letter-spacing:-0.35px">Clear Rules from <u>S</u>elected Cells</div>
<div class="t" style="left:471.3px;top:342.26px;font-size:10.8px;color:#ececec;font-weight:normal;letter-spacing:-0.35px">Clear Rules from <u>E</u>ntire Sheet</div>
<div class="t" style="left:471.3px;top:368.26px;font-size:10.8px;color:#ececec;font-weight:normal;letter-spacing:-0.35px">Clear Rules from <u>T</u>his Table</div>
<div class="t" style="left:471.3px;top:394.26px;font-size:10.8px;color:#4e4e4e;font-weight:normal;letter-spacing:-0.35px">Clear Rules from This <u>P</u>ivotTable</div>
<div class="a" style="left:463px;top:359px;width:158px;height:26.2px;border:3px solid #d7232b"></div>
</body></html>
